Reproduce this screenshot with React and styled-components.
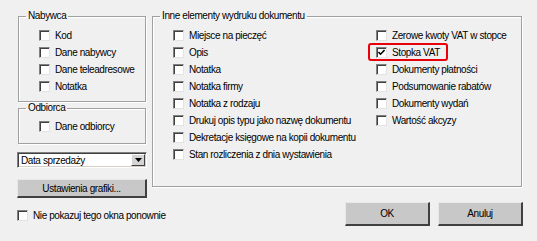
import styled, { createGlobalStyle } from 'styled-components'

const GlobalStyle = createGlobalStyle`
  html, body {
    margin: 0;
    padding: 0;
    background: #f0f0f0;
  }
  body {
    font-family: "Liberation Sans", Arial, sans-serif;
    font-size: 10px;
    letter-spacing: -0.4px;
    color: #000;
  }
`

const Dialog = styled.div`
  width: 537px;
  height: 241px;
  box-sizing: border-box;
  padding: 10px 0 0 17px;
  display: flex;
  gap: 5px;
  background: #f0f0f0;
`

const LeftColumn = styled.div`
  width: 130px;
  display: flex;
  flex-direction: column;
`

const RightColumn = styled.div`
  width: 370px;
  display: flex;
  flex-direction: column;
`

const Group = styled.fieldset`
  margin: 0 ${p => p.$inset ? '1px' : '0'};
  padding: ${p => p.$pad || '5px 0 6px 20px'};
  border: 1px solid #a0a0a0;
  box-shadow: inset 1px 1px 0 #fff, 1px 1px 0 #fff;
  min-width: 0;
  display: flex;
  flex-direction: column;
`

const Legend = styled.legend`
  margin-left: -13px;
  padding: 0 2px;
  font-size: 10px;
  line-height: 12px;
`

const Columns = styled.div`
  display: flex;
`

const Column = styled.div`
  width: ${p => p.$width || 'auto'};
  display: flex;
  flex-direction: column;
`

const Row = styled.label`
  position: relative;
  height: 17px;
  display: flex;
  align-items: center;
  gap: 5px;
  width: fit-content;
  white-space: nowrap;

  ${p => p.$highlight && `
    &::after {
      content: '';
      position: absolute;
      left: -8px;
      right: -8px;
      top: -1px;
      bottom: 0;
      border: 2px solid #e8000b;
      border-radius: 3px;
    }
  `}
`

const Box = styled.span`
  width: 11px;
  height: 11px;
  box-sizing: border-box;
  flex: none;
  background: #fff;
  border-top: 1px solid #808080;
  border-left: 1px solid #808080;
  border-right: 1px solid #e3e3e3;
  border-bottom: 1px solid #e3e3e3;
  box-shadow: inset 1px 1px 0 #404040;
  display: flex;
  align-items: center;
  justify-content: center;
`

const Combo = styled.div`
  margin-top: 8px;
  height: 16px;
  box-sizing: border-box;
  background: #fff;
  border-top: 1px solid #808080;
  border-left: 1px solid #808080;
  border-right: 1px solid #fff;
  border-bottom: 1px solid #fff;
  box-shadow: inset 1px 1px 0 #404040, inset -1px -1px 0 #d4d0c8;
  display: flex;
  align-items: center;
  padding: 0 1px 0 3px;
`

const ComboText = styled.span`
  flex: 1;
`

const ComboArrow = styled.span`
  width: 14px;
  height: 12px;
  box-sizing: border-box;
  background: #d4d4d4;
  border-top: 1px solid #fff;
  border-left: 1px solid #fff;
  border-right: 1px solid #404040;
  border-bottom: 1px solid #404040;
  display: flex;
  align-items: center;
  justify-content: center;
`

const Button = styled.button`
  width: ${p => p.$width || '100%'};
  height: ${p => p.$height || '19px'};
  margin: 0;
  padding: 0;
  box-sizing: border-box;
  background: #c8c8c8;
  border-top: 1px solid #e8e8e8;
  border-left: 1px solid #e8e8e8;
  border-right: 2px solid #404040;
  border-bottom: 2px solid #404040;
  font-family: "Liberation Sans", Arial, sans-serif;
  font-size: 10px;
  letter-spacing: -0.4px;
  color: #000;
`

const SettingsButton = styled(Button)`
  margin-top: 11px;
`

const BottomCheck = styled.div`
  margin-top: 9px;
`

const ButtonBar = styled.div`
  margin-top: 15px;
  margin-right: -1px;
  display: flex;
  justify-content: flex-end;
  gap: 8px;
`

const Check = ({ label, checked, highlight }) => (
  <Row $highlight={highlight}>
    <Box>
      {checked && (
        <svg width="7" height="7" viewBox="0 0 7 7">
          <polyline points="0.5,3 2.5,5.2 6.5,1" fill="none" stroke="#000" strokeWidth="1.6" />
        </svg>
      )}
    </Box>
    <span>{label}</span>
  </Row>
)

const inneLeft = [
  'Miejsce na pieczęć',
  'Opis',
  'Notatka',
  'Notatka firmy',
  'Notatka z rodzaju',
  'Drukuj opis typu jako nazwę dokumentu',
  'Dekretacje księgowe na kopii dokumentu',
  'Stan rozliczenia z dnia wystawienia',
]

const inneRight = [
  'Zerowe kwoty VAT w stopce',
  'Stopka VAT',
  'Dokumenty płatności',
  'Podsumowanie rabatów',
  'Dokumenty wydań',
  'Wartość akcyzy',
]

export default function App() {
  return (
    <>
      <GlobalStyle />
      <Dialog>
        <LeftColumn>
          <Group $inset>
            <Legend>Nabywca</Legend>
            <Check label="Kod" />
            <Check label="Dane nabywcy" />
            <Check label="Dane teleadresowe" />
            <Check label="Notatka" />
          </Group>
          <Group $inset $pad="4px 0 8px 20px">
            <Legend>Odbiorca</Legend>
            <Check label="Dane odbiorcy" />
          </Group>
          <Combo>
            <ComboText>Data sprzedaży</ComboText>
            <ComboArrow>
              <svg width="7" height="4" viewBox="0 0 7 4">
                <polygon points="0,0 7,0 3.5,4" fill="#000" />
              </svg>
            </ComboArrow>
          </Combo>
          <SettingsButton>Ustawienia grafiki...</SettingsButton>
          <BottomCheck>
            <Check label="Nie pokazuj tego okna ponownie" />
          </BottomCheck>
        </LeftColumn>
        <RightColumn>
          <Group $pad="5px 0 23px 20px">
            <Legend>Inne elementy wydruku dokumentu</Legend>
            <Columns>
              <Column $width="203px">
                {inneLeft.map(l => <Check key={l} label={l} />)}
              </Column>
              <Column>
                {inneRight.map(l => (
                  <Check key={l} label={l} checked={l === 'Stopka VAT'} highlight={l === 'Stopka VAT'} />
                ))}
              </Column>
            </Columns>
          </Group>
          <ButtonBar>
            <Button $width="85px" $height="24px">OK</Button>
            <Button $width="85px" $height="24px">Anuluj</Button>
          </ButtonBar>
        </RightColumn>
      </Dialog>
    </>
  )
}
